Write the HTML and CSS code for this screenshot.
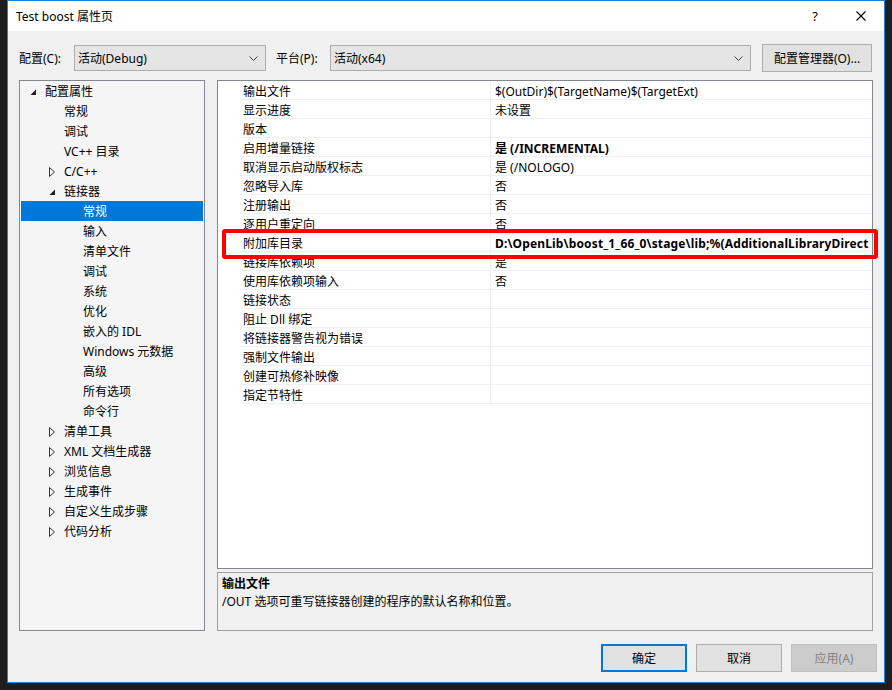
FILE: index.html
```html
<!DOCTYPE html>
<html lang="zh-CN">
<head>
  <meta charset="UTF-8">
  <title>Test boost 属性页</title>
  <link rel="stylesheet" href="styles.css">
</head>
<body>
  <div class="dialog">
    <div class="titlebar">
      <span class="title">Test boost 属性页</span>
      <span class="cap-btn help">?</span>
      <span class="cap-btn close">
        <svg width="10" height="10" viewBox="0 0 10 10"><path d="M0.5 0.5L9.5 9.5M9.5 0.5L0.5 9.5" stroke="#000" stroke-width="1.1" fill="none"/></svg>
      </span>
    </div>

    <div class="content">
      <div class="config-row">
        <label class="lbl lbl-config">配置(C):</label>
        <div class="combo combo-config">
          <span>活动(Debug)</span>
          <svg width="9" height="5" viewBox="0 0 9 5"><path d="M0.5 0.5L4.5 4.5L8.5 0.5" stroke="#444" fill="none"/></svg>
        </div>
        <label class="lbl lbl-platform">平台(P):</label>
        <div class="combo combo-platform">
          <span>活动(x64)</span>
          <svg width="9" height="5" viewBox="0 0 9 5"><path d="M0.5 0.5L4.5 4.5L8.5 0.5" stroke="#444" fill="none"/></svg>
        </div>
        <button class="btn btn-manager">配置管理器(O)...</button>
      </div>

      <div class="main">
        <div class="tree">
          <div class="node lvl0"><span class="tw"><svg width="7" height="7" viewBox="0 0 7 7"><path d="M6 0.5V6H0.5Z" fill="#1e1e1e"/></svg></span>配置属性</div>
          <div class="node lvl1"><span class="tw"></span>常规</div>
          <div class="node lvl1"><span class="tw"></span>调试</div>
          <div class="node lvl1"><span class="tw"></span>VC++ 目录</div>
          <div class="node lvl1"><span class="tw"><svg width="7" height="10" viewBox="0 0 7 10"><path d="M0.5 0.5L5.5 5L0.5 9.5Z" fill="none" stroke="#333"/></svg></span>C/C++</div>
          <div class="node lvl1"><span class="tw"><svg width="7" height="7" viewBox="0 0 7 7"><path d="M6 0.5V6H0.5Z" fill="#1e1e1e"/></svg></span>链接器</div>
          <div class="node lvl2 selected"><span class="tw"></span>常规</div>
          <div class="node lvl2"><span class="tw"></span>输入</div>
          <div class="node lvl2"><span class="tw"></span>清单文件</div>
          <div class="node lvl2"><span class="tw"></span>调试</div>
          <div class="node lvl2"><span class="tw"></span>系统</div>
          <div class="node lvl2"><span class="tw"></span>优化</div>
          <div class="node lvl2"><span class="tw"></span>嵌入的 IDL</div>
          <div class="node lvl2"><span class="tw"></span>Windows 元数据</div>
          <div class="node lvl2"><span class="tw"></span>高级</div>
          <div class="node lvl2"><span class="tw"></span>所有选项</div>
          <div class="node lvl2"><span class="tw"></span>命令行</div>
          <div class="node lvl1"><span class="tw"><svg width="7" height="10" viewBox="0 0 7 10"><path d="M0.5 0.5L5.5 5L0.5 9.5Z" fill="none" stroke="#333"/></svg></span>清单工具</div>
          <div class="node lvl1"><span class="tw"><svg width="7" height="10" viewBox="0 0 7 10"><path d="M0.5 0.5L5.5 5L0.5 9.5Z" fill="none" stroke="#333"/></svg></span>XML 文档生成器</div>
          <div class="node lvl1"><span class="tw"><svg width="7" height="10" viewBox="0 0 7 10"><path d="M0.5 0.5L5.5 5L0.5 9.5Z" fill="none" stroke="#333"/></svg></span>浏览信息</div>
          <div class="node lvl1"><span class="tw"><svg width="7" height="10" viewBox="0 0 7 10"><path d="M0.5 0.5L5.5 5L0.5 9.5Z" fill="none" stroke="#333"/></svg></span>生成事件</div>
          <div class="node lvl1"><span class="tw"><svg width="7" height="10" viewBox="0 0 7 10"><path d="M0.5 0.5L5.5 5L0.5 9.5Z" fill="none" stroke="#333"/></svg></span>自定义生成步骤</div>
          <div class="node lvl1"><span class="tw"><svg width="7" height="10" viewBox="0 0 7 10"><path d="M0.5 0.5L5.5 5L0.5 9.5Z" fill="none" stroke="#333"/></svg></span>代码分析</div>
        </div>

        <div class="right">
          <div class="grid">
            <div class="row"><span class="gut"></span><span class="name">输出文件</span><span class="val">$(OutDir)$(TargetName)$(TargetExt)</span></div>
            <div class="row"><span class="gut"></span><span class="name">显示进度</span><span class="val">未设置</span></div>
            <div class="row"><span class="gut"></span><span class="name">版本</span><span class="val"></span></div>
            <div class="row"><span class="gut"></span><span class="name">启用增量链接</span><span class="val bold">是 (/INCREMENTAL)</span></div>
            <div class="row"><span class="gut"></span><span class="name">取消显示启动版权标志</span><span class="val">是 (/NOLOGO)</span></div>
            <div class="row"><span class="gut"></span><span class="name">忽略导入库</span><span class="val">否</span></div>
            <div class="row"><span class="gut"></span><span class="name">注册输出</span><span class="val">否</span></div>
            <div class="row"><span class="gut"></span><span class="name">逐用户重定向</span><span class="val">否</span></div>
            <div class="row"><span class="gut"></span><span class="name">附加库目录</span><span class="val bold path">D:\OpenLib\boost_1_66_0\stage\lib;%(AdditionalLibraryDirect</span></div>
            <div class="row"><span class="gut"></span><span class="name">链接库依赖项</span><span class="val">是</span></div>
            <div class="row"><span class="gut"></span><span class="name">使用库依赖项输入</span><span class="val">否</span></div>
            <div class="row"><span class="gut"></span><span class="name">链接状态</span><span class="val"></span></div>
            <div class="row"><span class="gut"></span><span class="name">阻止 Dll 绑定</span><span class="val"></span></div>
            <div class="row"><span class="gut"></span><span class="name">将链接器警告视为错误</span><span class="val"></span></div>
            <div class="row"><span class="gut"></span><span class="name">强制文件输出</span><span class="val"></span></div>
            <div class="row"><span class="gut"></span><span class="name">创建可热修补映像</span><span class="val"></span></div>
            <div class="row"><span class="gut"></span><span class="name">指定节特性</span><span class="val"></span></div>
            <div class="highlight"></div>
          </div>
          <div class="desc">
            <div class="desc-title">输出文件</div>
            <div>/OUT 选项可重写链接器创建的程序的默认名称和位置。</div>
          </div>
        </div>
      </div>

      <div class="buttons">
        <button class="btn btn-ok">确定</button>
        <button class="btn">取消</button>
        <button class="btn disabled">应用(A)</button>
      </div>
    </div>
  </div>
</body>
</html>
```

FILE: styles.css
```css
body {
  margin: 0;
  background: #1e1e1e;
  font-family: "Segoe UI", "Noto Sans", "Noto Sans CJK SC", sans-serif;
  font-size: 12px;
  color: #000;
}

.dialog {
  box-sizing: border-box;
  width: 878px;
  height: 683px;
  margin-left: 7px;
  border: 1px solid #1883d7;
  background: #f0f0f0;
  display: flex;
  flex-direction: column;
}

.titlebar {
  height: 30px;
  background: #fff;
  display: flex;
  align-items: center;
}

.title {
  flex: 1;
  padding-left: 8px;
  font-size: 12px;
}

.cap-btn {
  width: 46px;
  height: 30px;
  display: flex;
  align-items: center;
  justify-content: center;
}

.help {
  font-size: 13px;
}

.content {
  flex: 1;
  padding: 0 11px;
  display: flex;
  flex-direction: column;
}

.config-row {
  margin-top: 13px;
  height: 28px;
  display: flex;
  align-items: center;
}

.lbl {
  box-sizing: border-box;
  width: 55px;
}

.lbl-platform {
  margin-left: 10px;
  width: 54px;
}

.combo {
  box-sizing: border-box;
  height: 26px;
  border: 1px solid #adadad;
  background: #e5e5e5;
  display: flex;
  align-items: center;
  justify-content: space-between;
  padding: 0 7px 0 3px;
}

.combo-config {
  width: 192px;
}

.combo-platform {
  width: 421px;
}

.btn {
  box-sizing: border-box;
  height: 28px;
  border: 1px solid #adadad;
  background: #e1e1e1;
  font-family: inherit;
  font-size: 12px;
  color: #000;
  padding: 0;
}

.btn-manager {
  width: 110px;
  margin-left: auto;
  margin-right: 1px;
}

.main {
  margin-top: 8px;
  height: 551px;
  display: flex;
  gap: 12px;
}

.tree {
  box-sizing: border-box;
  width: 186px;
  border: 1px solid #828790;
  background: #f5f5f5;
}

.node {
  height: 20px;
  line-height: 20px;
  padding-top: 1px;
  box-sizing: border-box;
  display: flex;
  align-items: center;
  white-space: nowrap;
}

.lvl0 { padding-left: 6px; }
.lvl1 { padding-left: 25px; }
.lvl2 { padding-left: 44px; }

.tw {
  width: 19px;
  height: 19px;
  display: flex;
  align-items: center;
}

.tw svg {
  margin-left: 4px;
}

.lvl0 .tw svg,
.lvl1 .tw svg[height="7"] {
  margin-top: 1px;
}

.node.selected {
  background: #0078d7;
  color: #fff;
  margin: 0 1px;
  padding-left: 43px;
}

.right {
  flex: 1;
  display: flex;
  flex-direction: column;
  gap: 3px;
}

.grid {
  position: relative;
  box-sizing: border-box;
  height: 489px;
  border: 1px solid #828790;
  background: #fff;
}

.row {
  display: grid;
  grid-template-columns: 21px 252px 1fr;
  height: 19px;
}

.name,
.val {
  box-sizing: border-box;
  height: 19px;
  line-height: 18px;
  padding-top: 2px;
  border-bottom: 1px solid #f0f0f0;
  padding-left: 4px;
  white-space: nowrap;
  overflow: hidden;
}

.name {
  border-right: 1px solid #f0f0f0;
}

.val.bold {
  font-weight: bold;
}

.val.path {
  letter-spacing: 0.15px;
}

.highlight {
  position: absolute;
  left: 4px;
  top: 148px;
  box-sizing: border-box;
  width: 656px;
  height: 30px;
  border: 4px solid #ff0000;
  border-radius: 3px;
}

.desc {
  box-sizing: border-box;
  height: 59px;
  border: 1px solid #a0a0a0;
  padding: 2px 4px 0;
  line-height: 18px;
}

.desc-title {
  font-weight: bold;
}

.buttons {
  margin-top: 13px;
  margin-right: -4px;
  display: flex;
  justify-content: flex-end;
  gap: 9px;
}

.buttons .btn {
  width: 86px;
}

.btn-ok {
  border: 2px solid #0078d7;
}

.btn.disabled {
  background: #cccccc;
  border-color: #bfbfbf;
  color: #838383;
}
```
